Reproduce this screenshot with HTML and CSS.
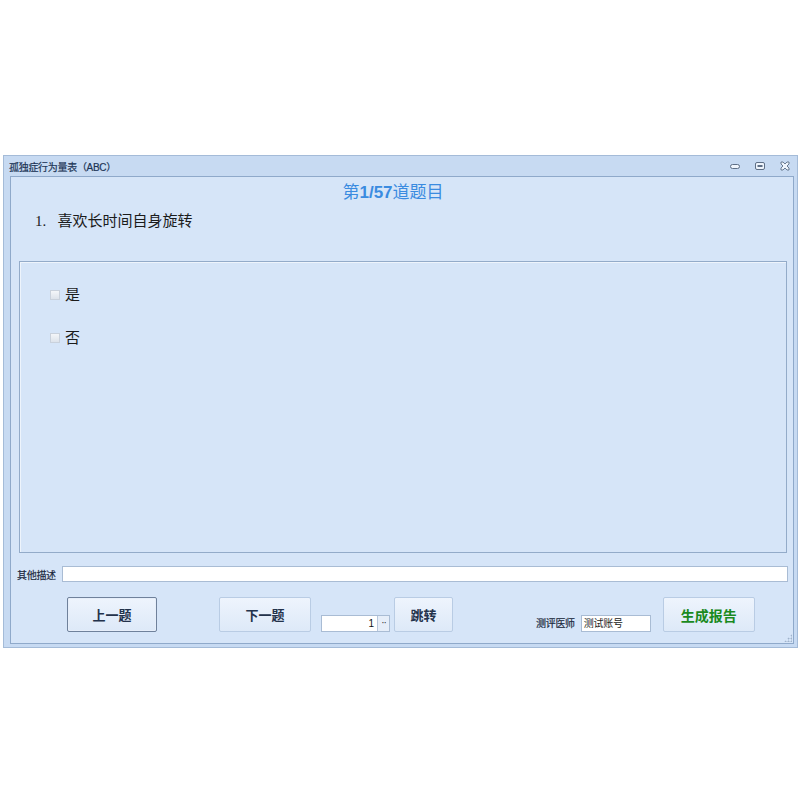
FILE: index.html
```html
<!DOCTYPE html>
<html lang="zh-CN">
  <head>
    <meta charset="UTF-8" />
    <meta name="viewport" content="width=device-width, initial-scale=1.0" />
    <title>孤独症行为量表（ABC）</title>
    <link rel="stylesheet" href="styles.css">
  </head>
  <body>
    <div class="window">
      <div class="titlebar">
        <span class="title">孤独症行为量表（ABC）</span>
        <div class="controls">
          <svg class="ctl" width="12" height="8" viewBox="0 0 12 8">
            <rect x="1.5" y="2.5" width="9" height="4" rx="2" fill="#eef4fc" stroke="#5e6f86" />
          </svg>
          <svg class="ctl" width="12" height="10" viewBox="0 0 12 10">
            <rect x="1.5" y="1.5" width="9" height="7" rx="1.5" fill="#eef4fc" stroke="#5e6f86" />
            <rect x="3.5" y="4" width="5" height="2" fill="#5e6f86" />
          </svg>
          <svg class="ctl" width="12" height="10" viewBox="0 0 12 10">
            <path d="M2 1h2l2 2 2-2h2v2l-2 2 2 2v2h-2l-2-2-2 2h-2v-2l2-2-2-2z" fill="#eef4fc" stroke="#5e6f86" stroke-width="0.9" />
          </svg>
        </div>
      </div>

      <div class="client">
        <div class="heading">第<b>1/57</b>道题目</div>
        <div class="question">1.&nbsp;&nbsp;&nbsp;喜欢长时间自身旋转</div>

        <div class="options">
          <label class="option"><span class="check"></span>是</label>
          <label class="option"><span class="check"></span>否</label>
        </div>

        <div class="remark">
          <span class="small-label">其他描述</span>
          <input class="remark-input" type="text" />
        </div>

        <div class="actions">
          <button class="btn focused">上一题</button>
          <button class="btn next">下一题</button>
          <div class="spinner">
            <span class="spin-value">1</span>
            <span class="spin-arrows">&middot;&middot;</span>
          </div>
          <button class="btn jump">跳转</button>
          <span class="small-label doctor">测评医师</span>
          <span class="doctor-box">测试账号</span>
          <button class="btn report">生成报告</button>
        </div>
        <div class="grip"></div>
      </div>
    </div>
  </body>
</html>
```

FILE: styles.css
```css
* {
  box-sizing: border-box;
}

body {
  margin: 0;
  padding-top: 155px;
  background: #fff;
  font-family: "Liberation Sans", "Noto Sans CJK SC", sans-serif;
  color: #1f2d44;
}

.window {
  margin-left: 3px;
  width: 795px;
  height: 493px;
  background: #c7daf2;
  border: 1px solid #a4bbd8;
  display: flex;
  flex-direction: column;
}

.titlebar {
  flex-shrink: 0;
  height: 20px;
  display: flex;
  align-items: center;
  justify-content: space-between;
  padding: 0 6px 0 5px;
}
.title {
  font-size: 10px;
  color: #1c3556;
  letter-spacing: -0.3px;
  -webkit-text-stroke: 0.2px #1c3556;
}
.controls {
  display: flex;
  gap: 13px;
  align-items: center;
}

.client {
  position: relative;
  flex: 1;
  min-height: 0;
  margin: 0 3px 3px 6px;
  background: #d6e5f8;
  border: 1px solid #8fa9ca;
  display: flex;
  flex-direction: column;
}

.heading {
  text-align: center;
  padding: 5px 18px 0 0;
  height: 26px;
  font-size: 17px;
  line-height: 21px;
  color: #3a8be0;
}
.heading b {
  font-weight: bold;
}
.question {
  padding: 9px 0 0 24px;
  font-family: "Liberation Serif", "Noto Sans CJK SC", serif;
  font-size: 15px;
  line-height: 18px;
  color: #1b1b1b;
}

.options {
  flex-shrink: 0;
  margin: 31px 6px 0 8px;
  height: 292px;
  border: 1px solid #93abc9;
  box-shadow: inset 1px 1px 0 #eef4fc;
  padding-top: 24px;
  display: flex;
  flex-direction: column;
  gap: 25px;
}
.option {
  display: flex;
  align-items: center;
  margin-left: 30px;
  font-family: "Liberation Serif", "Noto Sans CJK SC", serif;
  font-size: 15px;
  line-height: 18px;
  color: #1b1b1b;
}
.check {
  width: 10px;
  height: 10px;
  margin-right: 5px;
  border: 1px solid #c9d1dc;
  background: linear-gradient(#f4f6f9, #dde3eb);
}

.remark {
  display: flex;
  align-items: center;
  height: 16px;
  margin: 13px 5px 0 6px;
}
.small-label {
  font-size: 10px;
  color: #1c2a3e;
  letter-spacing: -0.3px;
  -webkit-text-stroke: 0.2px #1c2a3e;
}
.remark-input {
  flex: 1;
  height: 16px;
  margin-left: 6px;
  padding: 0;
  border: 1px solid #a9bcd4;
  background: #fff;
}

.actions {
  display: flex;
  align-items: flex-end;
  margin: 15px 0 0 56px;
}
.btn {
  height: 35px;
  border: 1px solid #b9cce4;
  border-radius: 2px;
  background: linear-gradient(#eef4fd, #dde9f8);
  font-family: "Noto Sans CJK SC", sans-serif;
  font-size: 13px;
  font-weight: bold;
  color: #23324b;
  padding: 0;
}
.btn.focused {
  width: 90px;
  border-color: #6f819b;
  box-shadow: inset 0 0 0 1px #e6eefa;
}
.btn.next {
  width: 92px;
  margin-left: 62px;
}
.spinner {
  display: flex;
  margin-left: 10px;
  width: 69px;
  height: 17px;
  border: 1px solid #a9bcd4;
  background: #fff;
}
.spin-value {
  flex: 1;
  text-align: right;
  font-size: 10px;
  line-height: 15px;
  padding-right: 3px;
  color: #111;
}
.spin-arrows {
  width: 12px;
  border-left: 1px solid #b7c7dc;
  background: #e6eef9;
  font-size: 10px;
  line-height: 13px;
  text-align: center;
  color: #333;
  letter-spacing: -1px;
}
.btn.jump {
  width: 59px;
  margin-left: 4px;
}
.doctor {
  margin-left: 83px;
  line-height: 17px;
}
.doctor-box {
  width: 70px;
  height: 17px;
  margin-left: 6px;
  border: 1px solid #a9bcd4;
  background: #fff;
  font-size: 10px;
  line-height: 15px;
  padding-left: 2px;
  color: #222;
  letter-spacing: -0.3px;
}
.btn.report {
  width: 92px;
  margin-left: 12px;
  color: #1a8a1e;
  font-size: 14px;
}

.grip {
  position: absolute;
  right: 1px;
  bottom: 1px;
  width: 8px;
  height: 8px;
  background: radial-gradient(circle, #9fb3cc 0.8px, transparent 1.2px) 0 0 / 3px 3px;
  clip-path: polygon(100% 0, 100% 100%, 0 100%);
}
```
